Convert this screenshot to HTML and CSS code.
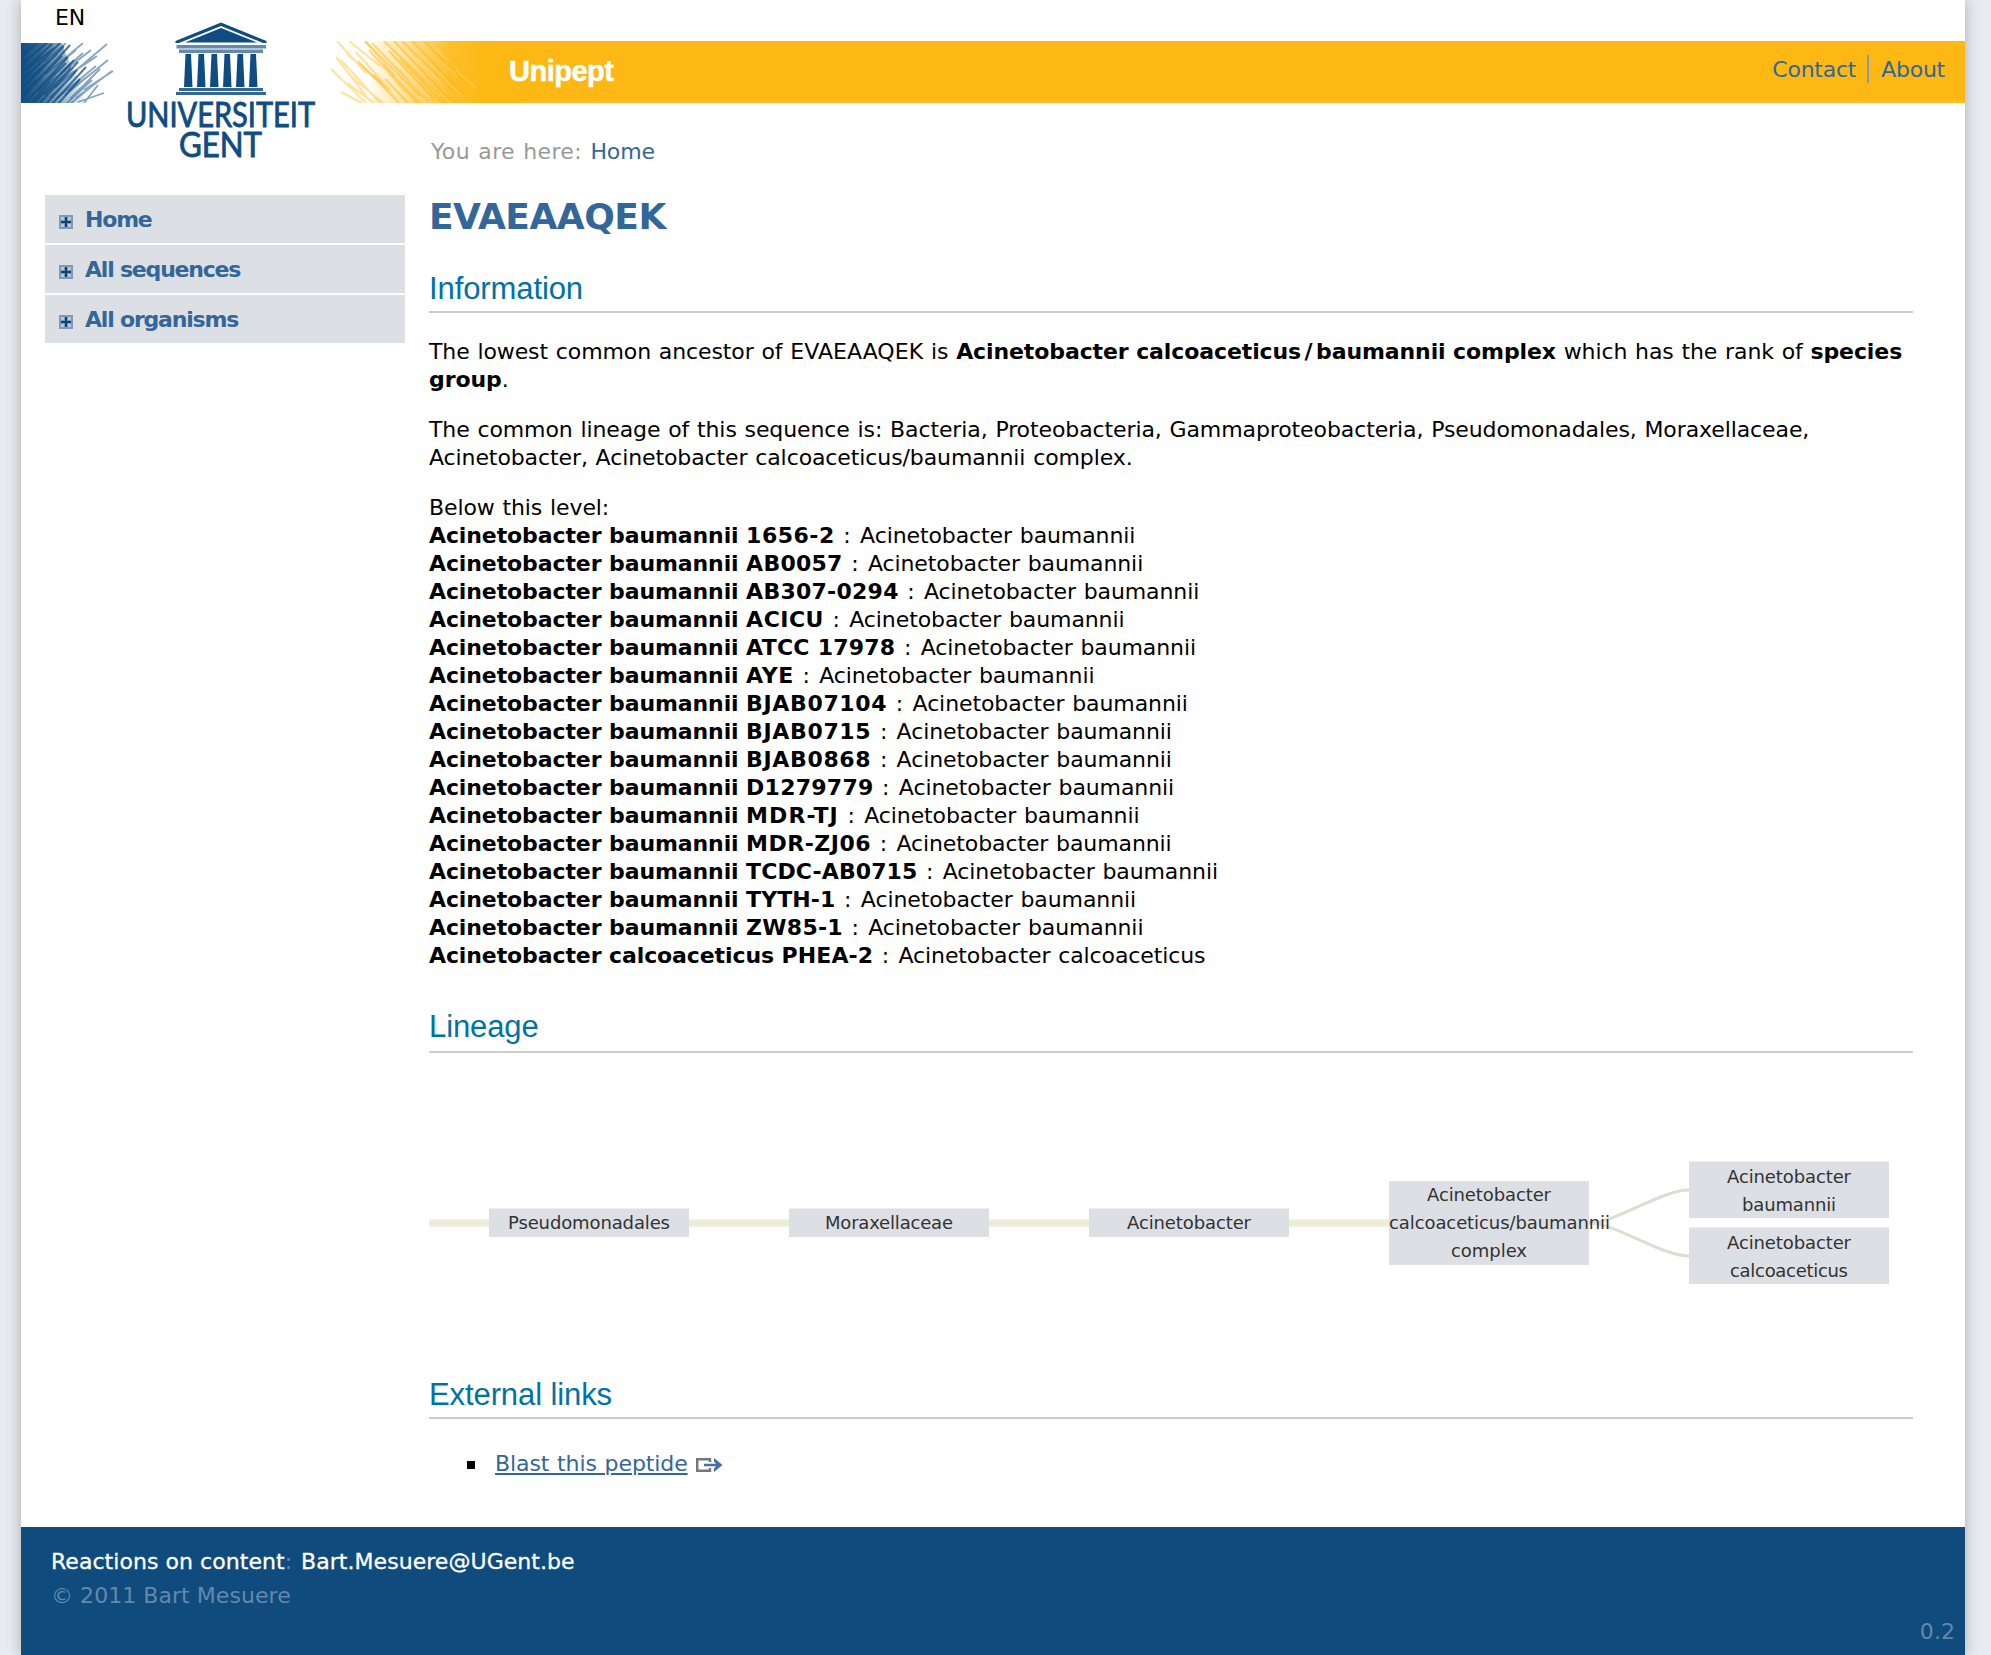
FILE: index.html
```html
<!DOCTYPE html>
<html lang="en">
<head>
<meta charset="utf-8">
<title>EVAEAAQEK - Unipept</title>
<link rel="stylesheet" href="styles.css">
</head>
<body>
<div class="page">
  <div class="languages"><span>EN</span></div>
  <header class="banner">
    <svg class="emblem" width="500" height="170" viewBox="21 0 500 170" aria-label="Universiteit Gent">
      <defs>
        <linearGradient id="ink"><stop offset="0" stop-color="#0f4c81"/><stop offset=".3" stop-color="#0f4c81" stop-opacity=".85"/><stop offset="1" stop-color="#0f4c81" stop-opacity="0"/></linearGradient>
        <linearGradient id="sun"><stop offset="0" stop-color="#fdb813" stop-opacity="0"/><stop offset=".35" stop-color="#fdb813" stop-opacity=".45"/><stop offset=".7" stop-color="#fdb813" stop-opacity=".9"/><stop offset="1" stop-color="#fdb813"/></linearGradient>
        <clipPath id="bluebox"><rect x="21" y="43" width="100" height="60"/></clipPath>
        <clipPath id="goldbox"><rect x="325" y="41" width="196" height="62"/></clipPath>
      </defs>
      <rect x="21" y="0" width="465" height="104" fill="#fff"/>
      <g clip-path="url(#bluebox)" fill="none" stroke="#0f4c81">
        <path d="M21 43H62L66 55L74 70L84 90L86 103H21Z" fill="url(#ink)" stroke="none"/>
        <path stroke-width="2" opacity=".75" d="M20 58L38 42M20 66L48 42M20 74L52 44M22 81L60 43M22 89L64 46M24 96L70 45M28 100L68 57M34 103L74 60M40 103L78 62M46 104L77 70M52 104L86 67M58 104L80 79M26 70L54 48M30 78L57 54M34 84L62 56M38 91L66 63M44 95L71 68M50 98L72 76M20 98L36 80M20 90L40 70M30 104L50 82"/>
        <path stroke-width="1.800" opacity=".5" d="M46 74L83 43M50 82L91 50M55 88L107 44M60 81L97 56M57 98L96 66M65 95L108 60M70 99L100 69M76 98L112 71M84 90L113 71M70 104L97 82M78 102L104 93M68 91L92 73M54 68L76 50M60 73L83 53M44 62L66 43M66 104L92 80M84 103L98 85"/>
      </g>
      <rect x="486" y="41" width="40" height="62" fill="#fdb813"/>
      <g clip-path="url(#goldbox)" fill="none" stroke="#fdb813">
        <path d="M376 41H487V103H371L372 86L366 70Z" fill="url(#sun)" stroke="none"/>
        <path stroke-width="2.200" opacity=".4" d="M337 41L366 73M336 57L370 101M331 69L366 103M341 92L362 103M349 41L380 66M356 52L391 91M341 60L380 103M352 77L383 103M347 54L387 88M365 41L395 76M347 83L374 103"/>
        <path stroke-width="2.200" opacity=".5" d="M365 41L420 96M372 43L428 101M384 41L440 96M375 57L420 103M382 64L417 103M362 65L397 101M374 75L399 103M394 41L450 100M402 41L455 92M412 41L460 90M389 51L434 99M425 42L470 87M400 59L443 103M409 68L446 103M420 77L448 103M431 61L468 98M385 79L408 103M369 50L405 91M358 61L391 95M438 45L474 78"/>
        <path stroke="#ffd36c" stroke-width="1.500" opacity=".6" d="M405 45L423 66M418 58L440 82M430 64L452 87M425 82L440 97M442 62L458 77M447 82L462 96M410 82L427 100M455 70L476 88M433 47L447 60M400 70L414 86M440 93L450 103"/>
      </g>
      <g fill="#0f4c81">
        <path d="M221 22.500L266.500 41V43H263L221 26L179 43H175.500V41Z"/>
        <path d="M221 28L257 42.500H185Z"/>
        <path d="M176.500 45H266V48.500H176.500ZM179 49.500H263V53H179Z" opacity=".65"/>
        <path d="M179 88H263V91H179ZM176 92H266V95H176Z" opacity=".85"/>
        <path d="M185.500 54h5.500l1.500 33h-8.500ZM198.500 54h5.500l1.500 33h-8.500ZM211.500 54h5.500l1.500 33h-8.500ZM224.500 54h5.500l1.500 33h-8.500ZM237.500 54h5.500l1.500 33h-8.500ZM250.500 54h5.500l1.500 33h-8.500Z"/>
      </g>
      <g class="emblem-text">
        <text x="126" y="127" textLength="189" lengthAdjust="spacingAndGlyphs">UNIVERSITEIT</text>
        <text x="179" y="157" textLength="83" lengthAdjust="spacingAndGlyphs">GENT</text>
      </g>
    </svg>
    <div class="site-name">Unipept</div>
    <nav class="top-links"><a href="#">Contact</a><a href="#">About</a></nav>
  </header>
  <div class="columns">
    <nav class="side">
      <a href="#"><svg width="14" height="14" viewBox="0 0 14 14"><path fill="#7c9bb8" d="M0 0H14V14H0Z"/><path fill="#b9c8d6" d="M2 2H5V5H2ZM9 2H12V5H9ZM2 9H5V12H2ZM9 9H12V12H9Z"/><path fill="#0f4274" d="M6 2H8V6H12V8H8V12H6V8H2V6H6Z"/></svg>Home</a>
      <a href="#"><svg width="14" height="14" viewBox="0 0 14 14"><path fill="#7c9bb8" d="M0 0H14V14H0Z"/><path fill="#b9c8d6" d="M2 2H5V5H2ZM9 2H12V5H9ZM2 9H5V12H2ZM9 9H12V12H9Z"/><path fill="#0f4274" d="M6 2H8V6H12V8H8V12H6V8H2V6H6Z"/></svg>All sequences</a>
      <a href="#"><svg width="14" height="14" viewBox="0 0 14 14"><path fill="#7c9bb8" d="M0 0H14V14H0Z"/><path fill="#b9c8d6" d="M2 2H5V5H2ZM9 2H12V5H9ZM2 9H5V12H2ZM9 9H12V12H9Z"/><path fill="#0f4274" d="M6 2H8V6H12V8H8V12H6V8H2V6H6Z"/></svg>All organisms</a>
    </nav>
    <main>
      <div class="crumbs">You are here: <a href="#">Home</a></div>
      <h1>EVAEAAQEK</h1>
      <h2>Information</h2>
      <p>The lowest common ancestor of <span class="peptide">EVAEAAQEK</span> is <b>Acinetobacter calcoaceticus<span class="slash">/</span>baumannii complex</b> which has the rank of <b>species<br>group</b>.</p>
      <p>The common lineage of this sequence is: Bacteria, Proteobacteria, Gammaproteobacteria, Pseudomonadales, Moraxellaceae,<br>Acinetobacter, Acinetobacter calcoaceticus/baumannii complex.</p>
      <p>Below this level:<br>
        <b>Acinetobacter baumannii <span class="m">1656-2</span></b><i> : </i>Acinetobacter baumannii<br>
        <b>Acinetobacter baumannii <span class="s">AB0057</span></b><i> : </i>Acinetobacter baumannii<br>
        <b>Acinetobacter baumannii <span class="s">AB307-0294</span></b><i> : </i>Acinetobacter baumannii<br>
        <b>Acinetobacter baumannii <span class="m">ACICU</span></b><i> : </i>Acinetobacter baumannii<br>
        <b>Acinetobacter baumannii <span class="s">ATCC 17978</span></b><i> : </i>Acinetobacter baumannii<br>
        <b>Acinetobacter baumannii <span class="l">AYE</span></b><i> : </i>Acinetobacter baumannii<br>
        <b>Acinetobacter baumannii <span class="l">BJAB07104</span></b><i> : </i>Acinetobacter baumannii<br>
        <b>Acinetobacter baumannii <span class="l">BJAB0715</span></b><i> : </i>Acinetobacter baumannii<br>
        <b>Acinetobacter baumannii <span class="l">BJAB0868</span></b><i> : </i>Acinetobacter baumannii<br>
        <b>Acinetobacter baumannii <span class="s">D1279779</span></b><i> : </i>Acinetobacter baumannii<br>
        <b>Acinetobacter baumannii <span class="xl">MDR-TJ</span></b><i> : </i>Acinetobacter baumannii<br>
        <b>Acinetobacter baumannii <span class="m">MDR-ZJ06</span></b><i> : </i>Acinetobacter baumannii<br>
        <b>Acinetobacter baumannii <span class="xs">TCDC-AB0715</span></b><i> : </i>Acinetobacter baumannii<br>
        <b>Acinetobacter baumannii <span class="xs">TYTH-1</span></b><i> : </i>Acinetobacter baumannii<br>
        <b>Acinetobacter baumannii <span class="s">ZW85-1</span></b><i> : </i>Acinetobacter baumannii<br>
        <b>Acinetobacter calcoaceticus <span class="xs">PHEA-2</span></b><i> : </i>Acinetobacter calcoaceticus</p>
      <h2 class="lineage-title">Lineage</h2>
      <svg class="lineage" width="1484" height="283" viewBox="429 1053 1484 283">
        <path d="M429 1223H1389" stroke="#f0f1e0" stroke-width="8"/>
        <path d="M429 1223H1389" stroke="#ebecd8" stroke-width="4"/>
        <g fill="none" stroke="#ddddd0" stroke-width="3"><path d="M1589 1223C1616 1223 1661 1190 1689 1190"/><path d="M1589 1223C1616 1223 1661 1256 1689 1256"/></g>
        <g fill="#dcdfe4"><rect x="489" y="1208.500" width="200" height="28.500"/><rect x="789" y="1208.500" width="200" height="28.500"/><rect x="1089" y="1208.500" width="200" height="28.500"/><rect x="1389" y="1181" width="200" height="84"/><rect x="1689" y="1161.500" width="200" height="56.500"/><rect x="1689" y="1227.500" width="200" height="56.500"/></g>
        <g class="labels">
          <text x="508" y="1229" textLength="162">Pseudomonadales</text>
          <text x="825" y="1229" textLength="128">Moraxellaceae</text>
          <text x="1127" y="1229" textLength="124">Acinetobacter</text>
          <text x="1427" y="1201" textLength="124">Acinetobacter</text>
          <text x="1389" y="1229" textLength="221">calcoaceticus/baumannii</text>
          <text x="1451" y="1257" textLength="76">complex</text>
          <text x="1727" y="1183" textLength="124">Acinetobacter</text>
          <text x="1742" y="1211" textLength="94">baumannii</text>
          <text x="1727" y="1249" textLength="124">Acinetobacter</text>
          <text x="1730" y="1277" textLength="118">calcoaceticus</text>
        </g>
      </svg>
      <h2 class="links-title">External links</h2>
      <ul><li><a href="#">Blast this peptide</a><svg width="27" height="14" viewBox="0 0 27 14" fill="none"><path d="M14 4V1.200H1.200V12.800H14V10" stroke="#777" stroke-width="2.400"/><path d="M8 7H22" stroke="#4470a3" stroke-width="2.500"/><path d="M18 0L26.500 7L18 14V10.500L21 7L18 3.500Z" fill="#4470a3"/></svg></li></ul>
    </main>
  </div>
  <footer>
    <div><a href="#">Reactions on content</a><span class="colon">: </span><a href="#">Bart.Mesuere@UGent.be</a></div>
    <div class="copyright">© 2011 Bart Mesuere</div>
    <div class="version">0.2</div>
  </footer>
</div>
</body>
</html>
```
FILE: styles.css
```css
* { box-sizing: border-box; }
body { margin: 0; background: #e9ebf0; font: 22px/28px Verdana, "DejaVu Sans", sans-serif; letter-spacing: -0.1px; color: #000; overflow: hidden; }
a { color: #336699; text-decoration: none; }
.page { width: 1944px; height: 1655px; margin-left: 21px; background: #fff; box-shadow: 0 0 14px rgba(0,0,0,.27); display: flex; flex-direction: column; }
.languages { height: 41px; padding: 4px 0 0 34px; }
.banner { position: relative; height: 62px; background: #fdb813; border-bottom: 2px solid #fdc02d; display: flex; justify-content: space-between; padding: 0 20px 0 488px; }
.emblem { position: absolute; left: 0; top: -41px; pointer-events: none; }
.emblem-text { font-family: Lato, sans-serif; font-size: 34px; fill: #0f4c81; stroke: #0f4c81; stroke-width: .9px; letter-spacing: 0; }
.languages span { position: relative; z-index: 2; }
.site-name { position: relative; font: bold 29px/60px "Liberation Sans", Arial, sans-serif; letter-spacing: -0.5px; color: #fff; -webkit-text-stroke: .5px #fff; }
.top-links { display: flex; height: 28px; margin-top: 14px; line-height: 30px; letter-spacing: -0.25px; }
.top-links a + a { margin-left: 11px; padding-left: 12px; border-left: 2px solid #8c9aa6; }
.columns { display: flex; flex: 1; padding: 0 52px 0 24px; }
.side { display: flex; flex-direction: column; gap: 2px; width: 360px; margin: 92px 24px 0 0; }
.side a { display: flex; align-items: center; height: 48px; padding: 2px 0 0 14px; background: #dcdfe4; font-weight: bold; letter-spacing: -1.2px; }
.side svg { margin: 4px 12px 0 0; }
main { width: 1484px; }
.crumbs { margin-top: 35px; padding-left: 2px; color: #999; letter-spacing: .35px; word-spacing: 1px; }
.crumbs a { letter-spacing: -0.1px; }
h1 { margin: 29px 0 0; font: bold 36px/44px Verdana, "DejaVu Sans", sans-serif; letter-spacing: -0.5px; color: #336699; }
h2 { margin: 29px 0 25px; padding-bottom: 1px; border-bottom: 2px solid #ccc; font: normal 31px/42px "Liberation Sans", Arial, sans-serif; letter-spacing: -0.1px; color: #0072a3; }
p { margin: 0 0 22px; white-space: nowrap; word-spacing: .9px; }
b { word-spacing: 0; }
p i { font-style: normal; letter-spacing: .7px; }
.peptide { letter-spacing: .05px; }
.slash { padding: 0 3.5px; }
.xs { letter-spacing: .1px; }
.s { letter-spacing: .25px; }
.m { letter-spacing: .5px; }
.l { letter-spacing: .65px; }
.xl { letter-spacing: 1.1px; }
.lineage-title { margin: 37px 0 0; padding-bottom: 4px; line-height: 40px; }
.lineage { display: block; }
.labels { font-size: 18px; fill: #333; letter-spacing: 0; }
.links-title { margin: 38px 0 31px; }
ul { margin: 0; padding: 0 0 0 66px; list-style: none; word-spacing: .9px; }
li { display: flex; align-items: center; }
li::before { content: ""; width: 8px; height: 8px; margin: 2px 20px 0 -28px; background: #000; }
li a { text-decoration: underline; text-decoration-thickness: 2px; text-underline-offset: 2px; }
li svg { margin: 1px 0 0 8px; }
footer { height: 128px; padding: 18px 10px 0 30px; background: #0f4c7d; color: #6488aa; line-height: 34px; letter-spacing: .05px; }
footer a { color: #fff; -webkit-text-stroke: .3px #fff; }
.colon { letter-spacing: 1px; }
.version { text-align: right; margin-top: 2px; }
```
